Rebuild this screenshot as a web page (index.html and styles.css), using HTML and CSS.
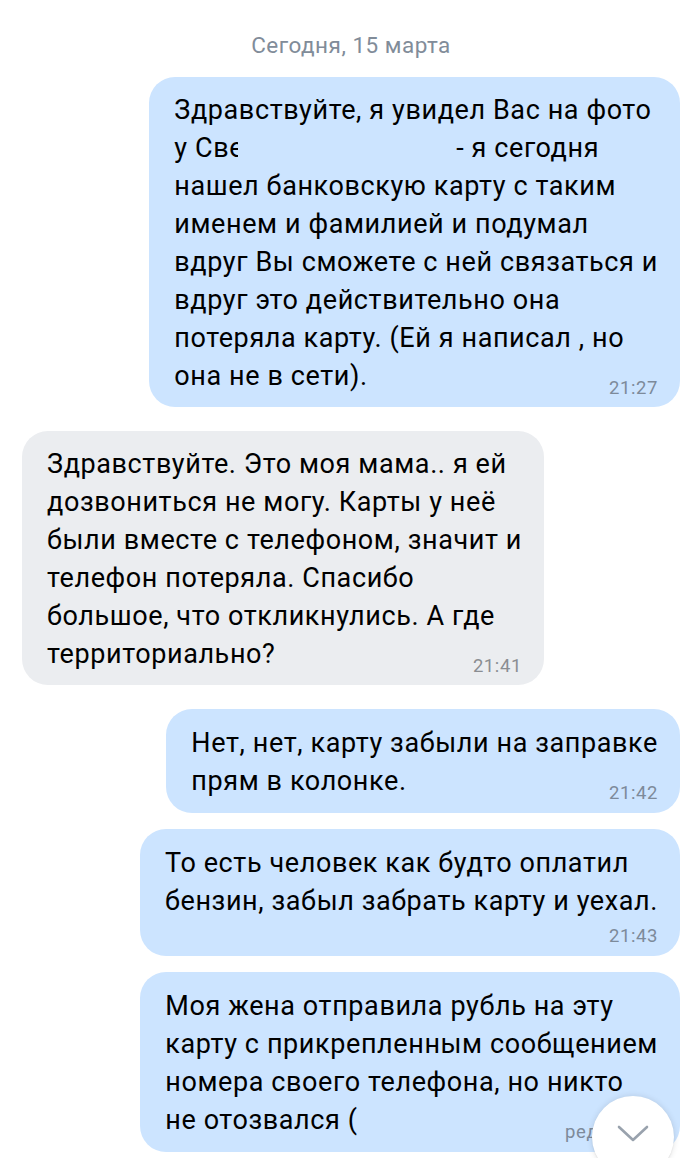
FILE: index.html
```html
<!DOCTYPE html>
<html lang="ru">
<head>
<meta charset="utf-8">
<title>Чат</title>
<link rel="stylesheet" href="styles.css">
</head>
<body>
<main class="chat">
  <div class="date">Сегодня, 15 марта</div>

  <div class="group out">
    <div class="bubble">
      <div class="text">Здравствуйте, я увидел Вас на фото<br>у Св<span class="cut">е</span><span class="hidden"></span>- я сегодня<br>нашел банковскую карту с таким<br>именем и фамилией и подумал<br>вдруг Вы сможете с ней связаться и<br>вдруг это действительно она<br>потеряла карту. (Ей я написал , но<br>она не в сети).</div>
      <div class="time tuck">21:27</div>
    </div>
  </div>

  <div class="group in">
    <div class="bubble">
      <div class="text">Здравствуйте. Это моя мама.. я ей<br>дозвониться не могу. Карты у неё<br>были вместе с телефоном, значит и<br>телефон потеряла. Спасибо<br>большое, что откликнулись. А где<br>территориально?</div>
      <div class="time tuck">21:41</div>
    </div>
  </div>

  <div class="group out">
    <div class="bubble short">
      <div class="text">Нет, нет, карту забыли на заправке<br>прям в колонке.</div>
      <div class="time tuck">21:42</div>
    </div>
    <div class="bubble short">
      <div class="text">То есть человек как будто оплатил<br>бензин, забыл забрать карту и уехал.</div>
      <div class="time">21:43</div>
    </div>
    <div class="bubble short">
      <div class="text">Моя жена отправила рубль на эту<br>карту с прикрепленным сообщением<br>номера своего телефона, но никто<br>не отозвался (</div>
      <div class="time tuck">ред. 21:44</div>
    </div>
  </div>
</main>

<button class="scroll-down" aria-label="Вниз">
  <svg width="34" height="18" viewBox="0 0 34 18"><path d="M3 3 L17 16 L31 3" fill="none" stroke="#99a2ad" stroke-width="2.6" stroke-linecap="round" stroke-linejoin="round"/></svg>
</button>
</body>
</html>
```

FILE: styles.css
```css
html, body {
  margin: 0;
  padding: 0;
  background: #ffffff;
}

body {
  font-family: Roboto, "Noto Sans", "Liberation Sans", sans-serif;
  color: #000000;
  overflow: hidden;
}

.chat {
  display: flex;
  flex-direction: column;
  gap: 24px;
  padding: 32px 20px 10px 22px;
}

.date {
  text-align: center;
  font-size: 22.5px;
  letter-spacing: 0.5px;
  line-height: 26px;
  color: #818c99;
  margin-bottom: -5px;
}

.group {
  display: flex;
  flex-direction: column;
  gap: 16px;
}

.group.out {
  align-items: flex-end;
}

.group.in {
  align-items: flex-start;
}

.bubble {
  border-radius: 26px;
  padding: 14px 22px 9px 25px;
}

.bubble.short {
  padding-top: 15px;
  padding-bottom: 10px;
}

.out .bubble {
  background: #cce4ff;
}

.in .bubble {
  background: #ebedf0;
}

.text {
  font-size: 27px;
  letter-spacing: 0.6px;
  line-height: 38px;
  white-space: nowrap;
}

.cut {
  display: inline-block;
  width: 9px;
  overflow: hidden;
  vertical-align: bottom;
}

.hidden {
  display: inline-block;
  width: 218px;
}

.time {
  text-align: right;
  font-size: 18.5px;
  letter-spacing: 0.6px;
  line-height: 20px;
  color: #7d8a9a;
  margin-top: 6px;
}

.in .time {
  color: #8a8d92;
}

.time.tuck {
  margin-top: -17px;
}

.scroll-down {
  position: fixed;
  left: 592px;
  top: 1096px;
  width: 82px;
  height: 82px;
  border: none;
  border-radius: 50%;
  background: #ffffff;
  box-shadow: 0 0 6px rgba(0, 0, 0, 0.12), 0 1px 2px rgba(0, 0, 0, 0.08);
  display: flex;
  align-items: center;
  justify-content: center;
  padding: 0 0 8px 0;
}
```
